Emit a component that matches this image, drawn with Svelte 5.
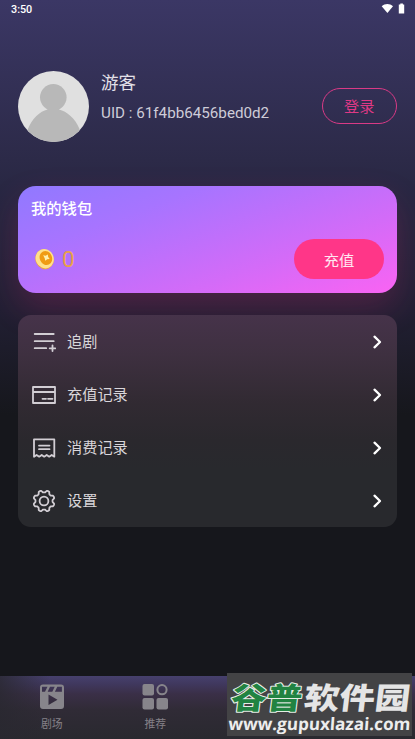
<script>
  const rows = [
    { label: '追剧', icon: 'list' },
    { label: '充值记录', icon: 'card' },
    { label: '消费记录', icon: 'receipt' },
    { label: '设置', icon: 'gear' }
  ];

  // Closed outline of the settings cog: eight shallow teeth around the centre.
  const gear = Array.from({ length: 96 }, (_, i) => {
    const a = (i / 96) * Math.PI * 2;
    const r = 9.6 + 1.1 * Math.tanh(2.2 * Math.cos(8 * a + Math.PI));
    return `${i ? 'L' : 'M'}${(12 + r * Math.sin(a)).toFixed(2)} ${(12 - r * Math.cos(a)).toFixed(2)}`;
  }).join('') + 'Z';
</script>

<div class="screen">
  <header class="status">
    <span>3:50</span>
    <svg width="26" height="12" viewBox="0 0 26 12" fill="#fff">
      <path d="M.7 3.2C4 .3 8.7.3 12 3.2L6.4 10.1Z" />
      <path d="M19.3.4h2.6v1h1.3v9h-5.400v-9h1.500Z" />
    </svg>
  </header>

  <section class="profile">
    <svg class="avatar" width="71" height="71" viewBox="0 0 71 71">
      <defs><clipPath id="face"><circle cx="35.5" cy="35.5" r="35.5" /></clipPath></defs>
      <g clip-path="url(#face)">
        <rect width="71" height="71" fill="#e0e0e0" />
        <circle cx="35.3" cy="26.3" r="13.3" fill="#b8b8b8" />
        <path d="M9.500 71V59C14 47 22 40.500 29.500 38.500V36h11.500v2.500C49 40.500 57 47 61.500 58V71Z" fill="#b8b8b8" />
      </g>
    </svg>
    <div class="who">
      <div class="name">游客</div>
      <div class="uid">UID : 61f4bb6456bed0d2</div>
    </div>
    <button class="login">登录</button>
  </section>

  <section class="wallet">
    <div class="title">我的钱包</div>
    <div class="balance">
      <svg width="20" height="22" viewBox="0 0 20 22">
        <ellipse cx="9.5" cy="11.3" rx="9" ry="10.2" transform="rotate(-24 9.5 11.3)" fill="#eda43b" />
        <ellipse cx="9.7" cy="10.7" rx="9" ry="9.8" transform="rotate(-24 9.7 10.7)" fill="#ffe18a" />
        <ellipse cx="10.9" cy="10" rx="6.1" ry="7.2" transform="rotate(-24 10.9 10)" fill="#f09b13" />
        <path d="M8.2 7.200l2.400.5 2.200-1.300.4 2.500 1.500 2-2.500.4-2 1.500-.5-2.500Z" fill="#fff0ae" />
      </svg>
      <span class="amount">0</span>
      <button class="topup">充值</button>
    </div>
  </section>

  <nav class="menu">
    {#each rows as row}
      <div class="row">
        <svg class="icon" width="24" height="24" viewBox="0 0 24 24">
          {#if row.icon === 'list'}
            <path d="M2.700 4h19M2.700 11.200h19M2.700 18.200h11.500M20.500 15.500v5.600M17.700 18.300h5.600" />
          {:else if row.icon === 'card'}
            <path d="M1 4h22v16H1ZM1 9h22" /><path d="M10.500 15.800h3.500M16 15.800h4.500" />
          {:else if row.icon === 'receipt'}
            <path d="M2 20.700V3.300h20.300v17.400l-2.600-1.800-2.500 1.800-2.500-1.800-2.500 1.800-2.500-1.800-2.500 1.800-2.600-1.800Z" />
            <path d="M7 9.600h10.500M7 13.200h10.500" />
          {:else}
            <path d={gear} /><circle cx="12" cy="12" r="4.400" />
          {/if}
        </svg>
        <span>{row.label}</span>
        <svg class="chevron" width="10" height="16" viewBox="0 0 10 16"><path d="M2.500 2.700l5.500 5.300-5.500 5.300" /></svg>
      </div>
    {/each}
  </nav>

  <footer class="tabs">
    <div class="tab">
      <svg width="26" height="26" viewBox="0 0 26 26">
        <path fill-rule="evenodd" d="M4 .5h18a3 3 0 0 1 3 3v18.500a3 3 0 0 1-3 3H4a3 3 0 0 1-3-3V3.500a3 3 0 0 1 3-3ZM3 2.700v5h3L8.500 2.700ZM11 2.700 8.700 7.700h4.600l2.400-5ZM18.300 2.700l-2.400 5h7V2.700ZM9.500 10.500v10.500l9-5.200Z" />
      </svg>
      <span>剧场</span>
    </div>
    <div class="tab">
      <svg width="26" height="26" viewBox="0 0 26 26">
        <rect x=".5" y="0" width="11.5" height="11.5" rx="2" />
        <rect x=".5" y="14" width="11.5" height="11.5" rx="2" />
        <rect x="14.500" y="14" width="11.5" height="11.5" rx="2" />
        <circle cx="20" cy="5.700" r="4.600" class="ring" />
      </svg>
      <span>推荐</span>
    </div>
  </footer>

  <svg class="stamp" width="185" height="63" viewBox="0 0 185 63">
    <rect width="185" height="63" fill="#434345" />
    <g class="brand" transform="translate(0 36) skewX(-7)">
      <text class="green" x="3" y="0" textLength="71" lengthAdjust="spacingAndGlyphs">谷普</text>
      <text class="white" x="76" y="0" textLength="106" lengthAdjust="spacingAndGlyphs">软件园</text>
    </g>
    <g transform="translate(0 57) skewX(-4)">
      <text class="url" x="1" y="0" textLength="182" lengthAdjust="spacingAndGlyphs">www.gupuxlazai.com</text>
    </g>
  </svg>
</div>

<style>
  :global(body) { margin: 0; background: #16171c; }
  .screen {
    position: relative;
    box-sizing: border-box;
    width: 415px;
    height: 739px;
    overflow: hidden;
    display: flex;
    flex-direction: column;
    background: linear-gradient(#3b3765 0, #2c2a48 160px, #262640 205px, #211f33 310px, #16171c 415px);
    color: #e3e0e8;
    font-family: Roboto, "Noto Sans CJK SC", sans-serif;
  }
  button { font: inherit; padding: 0; background: none; border: 0; }
  svg { display: block; flex: none; }
  .status {
    height: 19px;
    padding: 0 8px 0 11px;
    display: flex;
    align-items: center;
    justify-content: space-between;
    font-size: 10.8px;
    font-weight: 500;
    color: #fff;
  }
  .status svg { margin-top: -2px; }
  .profile { display: flex; padding: 52px 18px 0; height: 115px; }
  .avatar { margin-left: -.4px; }
  .who { margin-left: 12.5px; flex: 1; }
  .name { font-size: 17.5px; line-height: 24px; }
  .uid { font-size: 15.2px; line-height: 20px; margin-top: 8px; color: #ceccd8; white-space: nowrap; }
  .login {
    box-sizing: border-box;
    width: 75.5px;
    height: 36px;
    margin-top: 17px;
    padding-bottom: 2px;
    border: 1px solid #d93a86;
    border-radius: 18px;
    color: #df3985;
    font-size: 15.3px;
  }
  .wallet {
    box-sizing: border-box;
    flex: none;
    height: 107px;
    margin: 0 18px;
    padding: 12px 13px 0;
    border-radius: 18px;
    background: linear-gradient(160deg, #9079ff 0%, #a774ff 28%, #d36bf8 68%, #fa63f3 100%);
    box-shadow: 0 15px 35px rgba(255, 45, 128, .2);
  }
  .title { font-size: 15.3px; line-height: 23px; font-weight: 500; color: #fff; }
  .balance { display: flex; align-items: center; height: 40px; margin-top: 18px; padding-left: 4px; }
  .amount { margin-left: 7px; font-size: 22.5px; color: #eaa248; }
  .topup {
    margin-left: auto;
    width: 90px;
    height: 40px;
    border-radius: 20px;
    background: #ff3688;
    color: #ffe7f2;
    font-size: 15.3px;
  }
  .menu {
    flex: none;
    margin: 22px 18px 0;
    height: 212px;
    border-radius: 13px;
    background: linear-gradient(#46334a 0, #3e3040 40px, #312a32 88px, #2a282d 125px, #28292d 155px);
  }
  .row { display: flex; align-items: center; height: 53px; padding: 0 15px 0 14px; font-size: 15.2px; color: #d9d6da; }
  .row span { margin-left: 11px; padding-bottom: 3px; }
  .icon { fill: none; stroke: #d2ced4; stroke-width: 1.8; stroke-linecap: round; stroke-linejoin: round; }
  .chevron { margin-left: auto; fill: none; stroke: #fff; stroke-width: 2.3; stroke-linecap: round; stroke-linejoin: round; }
  .tabs {
    box-sizing: border-box;
    display: flex;
    height: 63px;
    margin-top: auto;
    background:
      linear-gradient(90deg, rgba(41, 40, 48, .8) 0, transparent 50px),
      linear-gradient(#46406d 0, #40385e 8px, #3a2f47 18px, #302b36 34px, #29292f 63px);
  }
  .tab { width: 103.5px; padding-top: 8px; display: flex; flex-direction: column; align-items: center; color: #858188; font-size: 10.8px; }
  .tab svg { fill: #87858b; }
  .tab .ring { fill: none; stroke: #87858b; stroke-width: 2; }
  .tab span { line-height: 16px; margin-top: 7px; }
  .stamp { position: absolute; left: 227px; top: 673px; overflow: visible; }
  .brand { font: 900 30px "Noto Sans CJK SC", sans-serif; paint-order: stroke; stroke-linejoin: round; }
  .green { fill: #218342; stroke: #e5eee5; stroke-width: 2px; }
  .white { fill: #e5e5e5; }
  .url { font: 700 17px "Open Sans", "Noto Sans", sans-serif; fill: #ededed; }
</style>
